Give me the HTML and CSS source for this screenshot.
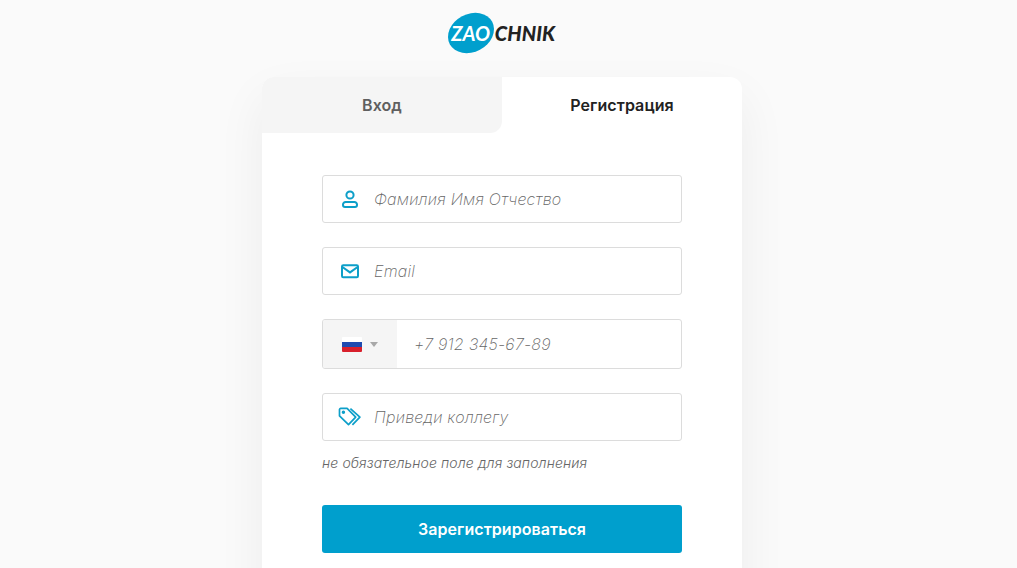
FILE: index.html
```html
<!DOCTYPE html>
<html lang="ru">
<head>
<meta charset="utf-8">
<title>Zaochnik</title>
<link rel="stylesheet" href="styles.css">
</head>
<body>
<header class="logo">
  <div class="logo-mark"><span class="logo-blob"></span><span class="logo-zao">ZAO</span></div>
  <span class="logo-rest">CHNIK</span>
</header>
<main class="card">
  <nav class="tabs">
    <a class="tab tab-off">Вход</a>
    <a class="tab tab-on">Регистрация</a>
  </nav>
  <form class="form">
    <label class="field">
      <svg class="icon" width="20" height="20" viewBox="0 0 20 20" fill="none" stroke="#0d9fc9" stroke-width="2"><circle cx="10" cy="6" r="3.6"/><path d="M5.6 13h8.8a2.6 2.6 0 0 1 2.6 2.6v.4a2 2 0 0 1-2 2H5a2 2 0 0 1-2-2v-.4A2.6 2.6 0 0 1 5.6 13z"/></svg>
      <span class="ph">Фамилия Имя Отчество</span>
    </label>
    <label class="field">
      <svg class="icon" width="20" height="20" viewBox="0 0 20 20" fill="none" stroke="#0d9fc9" stroke-width="2"><rect x="2" y="4.2" width="16" height="12" rx="1.2"/><path d="M2.4 6 10 11.4 17.6 6"/></svg>
      <span class="ph">Email</span>
    </label>
    <div class="field field-phone">
      <div class="flag-box">
        <span class="flag"><i class="w"></i><i class="b"></i><i class="r"></i></span>
        <span class="caret"></span>
      </div>
      <span class="ph ph-phone">+7 912 345-67-89</span>
    </div>
    <div class="group">
      <label class="field">
        <svg class="icon icon-tag" width="24" height="20" viewBox="0 0 24 20" fill="none" stroke="#0d9fc9" stroke-width="1.7" stroke-linejoin="round"><path d="M1.5 2.6a1.2 1.2 0 0 1 1.2-1.2h6.4l8.6 8.7-7.2 7.6-9-8.8z"/><path d="M12.4 1.6 21.9 10.1l-7.5 7.8"/><circle cx="5.4" cy="5.3" r=".9"/></svg>
        <span class="ph">Приведи коллегу</span>
      </label>
      <p class="hint">не обязательное поле для заполнения</p>
    </div>
    <button class="submit" type="button">Зарегистрироваться</button>
  </form>
</main>
</body>
</html>
```

FILE: styles.css
```css
* { box-sizing: border-box; }
html, body { height: 100%; overflow: hidden; }
body {
  margin: 0;
  padding-right: 13px;
  background: #fafafa;
  font-family: "Inter", "Liberation Sans", sans-serif;
  display: flex;
  flex-direction: column;
  align-items: center;
}
.logo {
  display: flex;
  align-items: center;
  height: 77px;
  flex: none;
  padding: 0 2px 12px 0;
}
.logo-mark {
  position: relative;
  width: 48px;
  height: 40px;
  display: flex;
  align-items: center;
  justify-content: center;
}
.logo-blob {
  position: absolute;
  inset: 1px 0;
  background: #009fcd;
  border-radius: 50%;
  transform: rotate(-28deg);
}
.logo-zao {
  position: relative;
  font: italic 700 20px "Lato", sans-serif;
  color: #fff;
  letter-spacing: 0.1px;
}
.logo-rest {
  font: italic 900 20px "Lato", sans-serif;
  color: #222;
  letter-spacing: 0.1px;
}
.card {
  width: 480px;
  flex: none;
  background: #fff;
  border-radius: 12px;
  box-shadow: 0 20px 50px rgba(0, 0, 0, 0.06);
  padding-bottom: 60px;
}
.tabs { display: flex; height: 56px; }
.tab {
  flex: 1;
  display: flex;
  align-items: center;
  justify-content: center;
  font-size: 16px;
  font-weight: 600;
  letter-spacing: 0.08px;
}
.tab-off {
  background: #f5f5f5;
  color: #5f5f5f;
  border-radius: 12px 0 12px 0;
}
.tab-on { color: #222; }
.form {
  padding: 42px 60px 0;
  display: flex;
  flex-direction: column;
  gap: 24px;
}
.field {
  height: 48px;
  border: 1px solid #dcdcdc;
  border-radius: 3px;
  display: flex;
  align-items: center;
  background: #fff;
}
.icon { margin-left: 17px; margin-right: 14px; flex: none; }
.icon-tag { margin-left: 15px; margin-right: 12px; }
.ph {
  font-family: "Inter", sans-serif;
  font-style: italic;
  font-weight: 200;
  font-size: 16px;
  letter-spacing: 0.22px;
  color: #666;
}
.field-phone { height: 50px; overflow: hidden; }
.flag-box {
  width: 74px;
  height: 100%;
  background: #f5f5f5;
  display: flex;
  align-items: center;
  padding-left: 19px;
  gap: 8px;
}
.flag {
  width: 20px;
  height: 15px;
  display: flex;
  flex-direction: column;
  border-radius: 1px;
  overflow: hidden;
}
.flag i { flex: 1; }
.flag .w { background: #fff; }
.flag .b { background: #1f4bb0; }
.flag .r { background: #d8202c; }
.caret {
  width: 0;
  height: 0;
  border-left: 4.5px solid transparent;
  border-right: 4.5px solid transparent;
  border-top: 5px solid #a8a8a8;
}
.ph-phone { margin-left: 17px; }
.group { display: flex; flex-direction: column; }
.hint {
  margin: 14px 0 10px;
  font-family: "Inter", sans-serif;
  font-style: italic;
  font-weight: 300;
  font-size: 14px;
  line-height: 16px;
  letter-spacing: 0.11px;
  color: #666;
}
.submit {
  height: 48px;
  border: 0;
  border-radius: 3px;
  background: #009fcd;
  color: #fff;
  font-family: inherit;
  font-size: 16px;
  font-weight: 600;
  letter-spacing: 0.06px;
}
```
